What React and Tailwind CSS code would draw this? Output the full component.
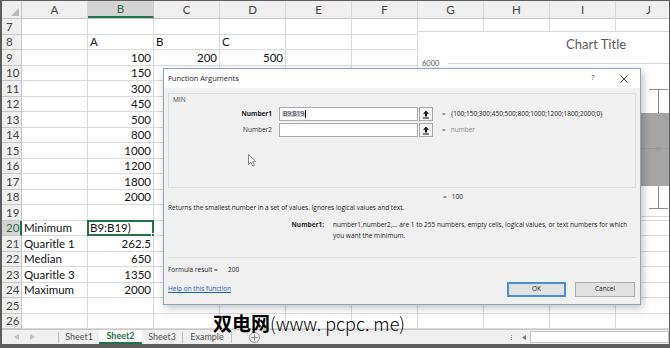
import React from 'react';

// Excel sheet with the Function Arguments (MIN) dialog open over it

const COLS = ['A', 'B', 'C', 'D', 'E', 'F', 'G', 'H', 'I', 'J'];
const ROWS = Array.from({ length: 20 }, (_, i) => i + 7);

const DATA = {
  8: ['', 'A', 'B', 'C'],
  9: ['', 100, 200, 500],
  10: ['', 150],
  11: ['', 300],
  12: ['', 450],
  13: ['', 500],
  14: ['', 800],
  15: ['', 1000],
  16: ['', 1200],
  17: ['', 1800],
  18: ['', 2000],
  20: ['Minimum', 'B9:B19)'],
  21: ['Quaritle 1', 262.5],
  22: ['Median', 650],
  23: ['Quaritle 3', 1350],
  24: ['Maximum', 2000],
};

const HeaderRow = () => (
  <div className="flex h-[18px] shrink-0 bg-[#efefef] border-b border-[#c6c6c6] text-[11.5px] text-[#444]">
    <div className="relative w-[20px] shrink-0 border-r border-[#c6c6c6]">
      <svg className="absolute right-[2px] bottom-[2px]" width="8" height="8">
        <polygon points="8,0 8,8 0,8" fill="#b9b9b9" />
      </svg>
    </div>
    {COLS.map((c) => (
      <div
        key={c}
        className={
          c === 'B'
            ? 'w-[66px] shrink-0 flex items-center justify-center bg-[#d4d4d4] text-[#2b6e47] border-r border-[#c6c6c6] border-b-2 border-b-[#217346]'
            : 'w-[66px] shrink-0 flex items-center justify-center border-r border-[#d6d6d6]'
        }
      >
        {c}
      </div>
    ))}
  </div>
);

const Row = ({ n }) => {
  const vals = DATA[n] || [];
  const selected = n === 20;
  return (
    <div className="flex h-[15.5px] shrink-0">
      <div
        className={
          selected
            ? 'w-[20px] shrink-0 flex items-center pl-[4px] bg-[#d4d4d4] text-[#2b6e47] text-[11.5px] border-b border-[#c6c6c6] border-r-2 border-r-[#217346]'
            : 'w-[20px] shrink-0 flex items-center pl-[4px] bg-[#efefef] text-[#444] text-[11.5px] border-b border-r border-[#c6c6c6]'
        }
      >
        {n}
      </div>
      {COLS.map((c, i) => {
        const v = vals[i];
        const isNum = typeof v === 'number';
        const editing = selected && c === 'B';
        return (
          <div
            key={c}
            className={
              isNum
                ? 'relative w-[66px] shrink-0 flex items-center justify-end pr-[2px] border-r border-b border-[#dadada] text-[11.5px] text-[#111]'
                : 'relative w-[66px] shrink-0 flex items-center pl-[2px] border-r border-b border-[#dadada] text-[11.5px] text-[#111]'
            }
          >
            {v !== undefined && v !== '' ? v : null}
            {editing && (
              <div className="absolute -left-px -top-px -right-px -bottom-px border-2 border-[#217346]">
                <div className="absolute -right-[3px] -bottom-[3px] w-[4px] h-[4px] bg-[#217346] border border-white" />
              </div>
            )}
          </div>
        );
      })}
    </div>
  );
};

const TabBar = () => (
  <div className="flex h-[15px] shrink-0 items-center bg-[#efefef] border-t border-[#c6c6c6] text-[9px] text-[#555]">
    <div className="w-[56px] shrink-0 flex items-center gap-[11px] pl-[12px]">
      <svg width="5" height="6"><polygon points="5,0 5,6 0,3" fill="#c2c2c2" /></svg>
      <svg width="5" height="6"><polygon points="0,0 0,6 5,3" fill="#c2c2c2" /></svg>
    </div>
    <div className="w-[41px] h-[11px] shrink-0 flex items-center justify-center border-l border-[#bdbdbd]">Sheet1</div>
    <div className="w-[43px] h-full shrink-0 flex items-center justify-center bg-white border-b-2 border-[#217346] font-bold text-[#217346]">
      Sheet2
    </div>
    <div className="w-[41px] h-[11px] shrink-0 flex items-center justify-center border-r border-[#bdbdbd]">Sheet3</div>
    <div className="w-[49px] h-[11px] shrink-0 flex items-center justify-center border-r border-[#bdbdbd]">Example</div>
    <div className="ml-[17px] w-[11px] h-[11px] rounded-full border border-[#9a9a9a] flex items-center justify-center">
      <svg width="7" height="7">
        <line x1="3.5" y1="0.5" x2="3.5" y2="6.5" stroke="#8a8a8a" strokeWidth="1" />
        <line x1="0.5" y1="3.5" x2="6.5" y2="3.5" stroke="#8a8a8a" strokeWidth="1" />
      </svg>
    </div>
    <div className="flex-1" />
    <div className="flex items-center h-full">
      <div className="flex flex-col gap-[1px] mr-[10px]">
        <div className="w-px h-px bg-[#9a9a9a]" />
        <div className="w-px h-px bg-[#9a9a9a]" />
        <div className="w-px h-px bg-[#9a9a9a]" />
      </div>
      <svg className="mr-[4px]" width="4" height="5"><polygon points="4,0 4,5 0,2.5" fill="#777" /></svg>
      <div className="w-[139px] h-[12px] bg-white border border-[#c6c6c6]" />
    </div>
  </div>
);

const Chart = () => (
  <div className="absolute left-[415px] top-[30px] w-[260px] h-[186px] bg-white border border-[#d9d9d9]">
    <div className="absolute left-[148px] top-[3px] text-[13px] text-[#595959] whitespace-nowrap">Chart Title</div>
    <div className="absolute left-[4px] top-[26px] text-[7.5px] text-[#595959]">6000</div>
    <svg className="absolute left-0 top-0" width="260" height="186">
      <line x1="30" y1="31.5" x2="260" y2="31.5" stroke="#d9d9d9" strokeWidth="1" />
      <rect x="215" y="81" width="36" height="73" fill="#a5a5a5" />
      <line x1="215" y1="116.5" x2="251" y2="116.5" stroke="#9a9a9a" strokeWidth="1" />
      <path d="M237.5 114 l5 5 M242.5 114 l-5 5" stroke="#8c8c8c" strokeWidth="0.8" />
      <line x1="240.5" y1="57" x2="240.5" y2="81" stroke="#8c8c8c" strokeWidth="1" />
      <line x1="231" y1="57.5" x2="250" y2="57.5" stroke="#8c8c8c" strokeWidth="1" />
      <line x1="240.5" y1="154" x2="240.5" y2="176" stroke="#8c8c8c" strokeWidth="1" />
      <line x1="231" y1="176.5" x2="250" y2="176.5" stroke="#8c8c8c" strokeWidth="1" />
    </svg>
  </div>
);

const RefButton = () => (
  <div className="w-[14px] h-[14px] ml-px shrink-0 bg-[#f5f5f5] border border-[#a8a8a8] flex items-center justify-center">
    <svg width="8" height="9" viewBox="0 0 8 9">
      <polygon points="4,0.5 1,3.8 7,3.8" fill="#111" />
      <rect x="3" y="3.5" width="2" height="3" fill="#111" />
      <rect x="1" y="7.5" width="6" height="1" fill="#111" />
    </svg>
  </div>
);

const Dialog = () => (
  <div className="absolute left-[161px] top-[67px] w-[478px] h-[237px] border border-[#8ea7c0] shadow-[2px_3px_8px_rgba(0,0,0,0.25)] font-['Open_Sans',sans-serif] text-[#222] flex flex-col">
    {/* Title bar */}
    <div className="h-[19px] shrink-0 bg-white flex items-center pl-[4px]">
      <span className="text-[7.5px]">Function Arguments</span>
      <div className="flex-1" />
      <span className="w-[14px] text-center text-[7px] text-[#444]">?</span>
      <div className="ml-[17px] mr-[9px] w-[14px] flex justify-center">
        <svg width="8" height="8">
          <path d="M0.5 0.5 L7.5 7.5 M7.5 0.5 L0.5 7.5" stroke="#333" strokeWidth="0.9" />
        </svg>
      </div>
    </div>

    {/* Body */}
    <div className="flex-1 bg-[#f0f0f0] px-[4px] pt-[5px] text-[6.5px] leading-none">
      <div className="relative w-[468px] h-[95px] border border-[#dcdcdc]">
        <div className="h-[13px] pl-[4px] pt-[3px] text-[#444]">MIN</div>
        <div className="flex items-center h-[14px]">
          <div className="w-[103px] text-right font-bold">Number1</div>
          <div className="ml-[7px] w-[139px] h-[14px] bg-white border border-[#a9abb0] flex items-center pl-[2px]">
            <span className="bg-[#cdd3dc] text-[#333] px-px">B9:B19</span>
            <span className="w-px h-[8px] bg-black" />
          </div>
          <RefButton />
          <span className="ml-[9px] text-[#555]">=</span>
          <span className="ml-[5px] whitespace-nowrap">{'{100;150;300;450;500;800;1000;1200;1800;2000;0}'}</span>
        </div>
        <div className="flex items-center h-[14px] mt-[2px]">
          <div className="w-[103px] text-right text-[#333]">Number2</div>
          <div className="ml-[7px] w-[139px] h-[14px] bg-white border border-[#a9abb0]" />
          <RefButton />
          <span className="ml-[9px] text-[#555]">=</span>
          <span className="ml-[5px] text-[#8a8a8a]">number</span>
        </div>
        <svg className="absolute left-[79px] top-[60px]" width="9" height="13">
          <path d="M0.5 0.5 L0.5 10.5 L2.9 8.3 L4.7 12.2 L6.3 11.5 L4.6 7.7 L7.8 7.7 Z" fill="#fff" stroke="#555" strokeWidth="0.7" />
        </svg>
      </div>

      <div className="h-[12px] mt-[3px] flex items-center pl-[275px]">
        <span className="text-[#555]">=</span>
        <span className="ml-[5px]">100</span>
      </div>
      <div className="h-[10px] flex items-center whitespace-nowrap">
        Returns the smallest number in a set of values. Ignores logical values and text.
      </div>
      <div className="flex mt-[6px] h-[22px]">
        <div className="w-[156px] text-right font-bold leading-[11px]">Number1:</div>
        <div className="ml-[9px] w-[303px] leading-[11px]">
          number1,number2,... are 1 to 255 numbers, empty cells, logical values, or text numbers for which you want the minimum.
        </div>
      </div>
      <div className="mt-[16px] w-[468px] h-px bg-[#dcdcdc]" />
      <div className="mt-[7px] h-[10px] flex items-center">
        <span className="w-[60px]">Formula result =</span>
        <span>200</span>
      </div>
      <div className="mt-[7px] h-[15px] flex items-center">
        <span className="text-[#1a5fb4] underline">Help on this function</span>
        <div className="flex-1" />
        <div className="w-[59px] h-[15px] bg-[#e1e1e1] border-2 border-[#4a8fcf] flex items-center justify-center">OK</div>
        <div className="ml-[9px] mr-px w-[60px] h-[15px] bg-[#e1e1e1] border border-[#adadad] flex items-center justify-center">
          Cancel
        </div>
      </div>
    </div>
  </div>
);

export default function App() {
  return (
    <div className="relative w-[670px] h-[348px] overflow-hidden bg-white border-t border-r border-b border-l-2 border-[#5e5e5e] font-['Lato',sans-serif] flex flex-col">
      <HeaderRow />
      {ROWS.map((n) => (
        <Row key={n} n={n} />
      ))}
      <TabBar />
      <div className="flex-1 bg-[#5e5e5e]" />

      <Chart />
      <Dialog />

      {/* watermark */}
      <div className="absolute left-[211px] top-[312px] flex items-end leading-none text-black whitespace-nowrap font-['Noto_Sans_CJK_SC',sans-serif]">
        <span className="text-[19px] font-bold">双电网</span>
        <span className="text-[18px] font-light">(www. pcpc. me)</span>
      </div>
    </div>
  );
}
